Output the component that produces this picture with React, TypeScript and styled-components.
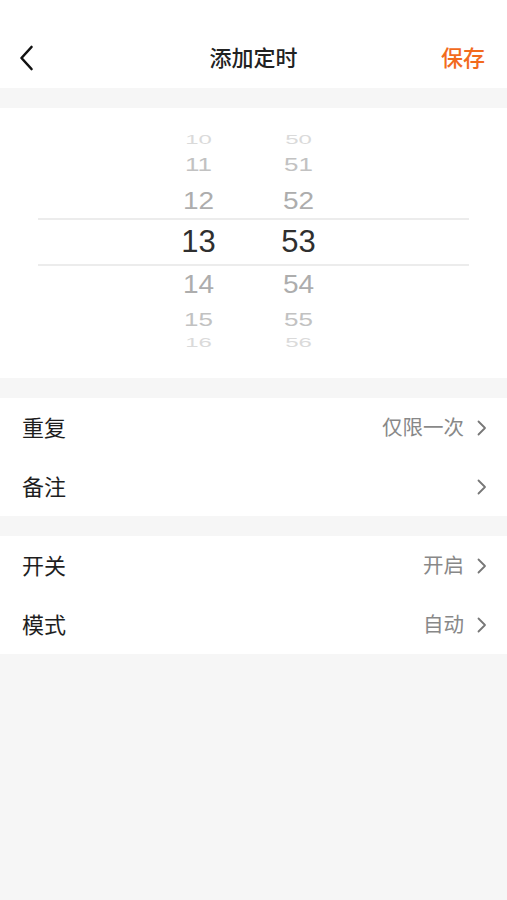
import React from "react";
import styled, { createGlobalStyle } from "styled-components";

const Global = createGlobalStyle`
  html, body { margin: 0; padding: 0; background: #f6f6f6; }
  body { font-family: "Liberation Sans", "Noto Sans CJK SC", sans-serif; }
  * { box-sizing: border-box; }
`;

const Page = styled.div`
  width: 507px;
  min-height: 900px;
  background: #f6f6f6;
  display: flex;
  flex-direction: column;
`;

const Header = styled.header`
  height: 88px;
  padding-top: 28px;
  background: #fff;
  display: grid;
  grid-template-columns: 80px 1fr 80px;
  align-items: center;
`;

const BackButton = styled.button`
  border: 0;
  background: none;
  padding: 0 0 0 19px;
  height: 100%;
  display: flex;
  align-items: center;
`;

const Title = styled.h1`
  margin: -5px 0 0;
  text-align: center;
  font-family: "Noto Sans CJK SC", sans-serif;
  font-size: 22px;
  font-weight: 500;
  color: #222;
`;

const SaveButton = styled.button`
  border: 0;
  background: none;
  margin-top: -5px;
  padding: 0 22px 0 0;
  text-align: right;
  font-family: "Noto Sans CJK SC", sans-serif;
  font-size: 22px;
  font-weight: 500;
  color: #f26b1d;
`;

const Section = styled.section<{ $gap?: number }>`
  margin-top: ${(p) => p.$gap ?? 20}px;
  background: #fff;
`;

const PickerArea = styled.div`
  padding: 24px 38px 27px;
`;

const Wheel = styled.div`
  position: relative;
  display: flex;
  justify-content: center;
  padding-right: 10px;
  height: 219px;
  overflow: hidden;
`;

const Band = styled.div`
  position: absolute;
  left: 0;
  right: 0;
  top: 86px;
  height: 48px;
  border-top: 2px solid #ececec;
  border-bottom: 2px solid #ececec;
  pointer-events: none;
`;

const Column = styled.div`
  width: 100px;
  display: flex;
  flex-direction: column;
  align-items: center;
`;

const Slot = styled.div<{ $h: number; $size: number; $scale: number; $color: string; $shift: number }>`
  height: ${(p) => p.$h}px;
  display: flex;
  align-items: center;
  justify-content: center;
  font-family: "Liberation Sans", sans-serif;
  font-size: ${(p) => p.$size}px;
  color: ${(p) => p.$color};
  transform: translateY(${(p) => p.$shift}px) scaleY(${(p) => p.$scale});
  line-height: 1;
`;

const Row = styled.div`
  height: 59px;
  padding: 0 20px 0 22px;
  display: flex;
  align-items: center;
  font-family: "Noto Sans CJK SC", sans-serif;
`;

const Label = styled.span`
  flex: 1;
  margin-top: -4px;
  font-size: 22px;
  font-weight: 400;
  color: #1e1e1e;
`;

const Value = styled.span`
  margin-top: -4px;
  font-size: 20.5px;
  color: #888;
  margin-right: 13px;
`;

const slots = [
  { h: 16, size: 24, scale: 0.55, color: "#dadada", shift: 0 },
  { h: 32, size: 26, scale: 0.74, color: "#c2c2c2", shift: 0 },
  { h: 38, size: 28, scale: 0.88, color: "#adadad", shift: 2 },
  { h: 47, size: 31, scale: 1, color: "#2f2f2f", shift: 0 },
  { h: 38, size: 28, scale: 0.9, color: "#adadad", shift: 1 },
  { h: 32, size: 26, scale: 0.74, color: "#c2c2c2", shift: 0 },
  { h: 16, size: 24, scale: 0.55, color: "#dadada", shift: 0 },
];

const hours = ["10", "11", "12", "13", "14", "15", "16"];
const minutes = ["50", "51", "52", "53", "54", "55", "56"];

const Chevron = () => (
  <svg width="10" height="16" viewBox="0 0 10 16" fill="none">
    <path d="M1.5 1.5 L8 8 L1.5 14.5" stroke="#777" strokeWidth="1.8" strokeLinecap="round" strokeLinejoin="round" />
  </svg>
);

const BackIcon = () => (
  <svg width="15" height="26" viewBox="0 0 15 26" fill="none">
    <path d="M12.5 2 L2.5 13 L12.5 24" stroke="#111" strokeWidth="2.6" strokeLinecap="round" strokeLinejoin="round" />
  </svg>
);

const WheelColumn = ({ values }: { values: string[] }) => (
  <Column>
    {values.map((v, i) => (
      <Slot
        key={v}
        $h={slots[i].h}
        $size={slots[i].size}
        $scale={slots[i].scale}
        $color={slots[i].color}
        $shift={slots[i].shift}
      >
        {v}
      </Slot>
    ))}
  </Column>
);

const SettingRow = ({ label, value }: { label: string; value?: string }) => (
  <Row>
    <Label>{label}</Label>
    {value && <Value>{value}</Value>}
    <Chevron />
  </Row>
);

export default function App() {
  return (
    <Page>
      <Global />
      <Header>
        <BackButton aria-label="返回">
          <BackIcon />
        </BackButton>
        <Title>添加定时</Title>
        <SaveButton>保存</SaveButton>
      </Header>
      <Section>
        <PickerArea>
          <Wheel>
            <WheelColumn values={hours} />
            <WheelColumn values={minutes} />
            <Band />
          </Wheel>
        </PickerArea>
      </Section>
      <Section>
        <SettingRow label="重复" value="仅限一次" />
        <SettingRow label="备注" />
      </Section>
      <Section>
        <SettingRow label="开关" value="开启" />
        <SettingRow label="模式" value="自动" />
      </Section>
    </Page>
  );
}
